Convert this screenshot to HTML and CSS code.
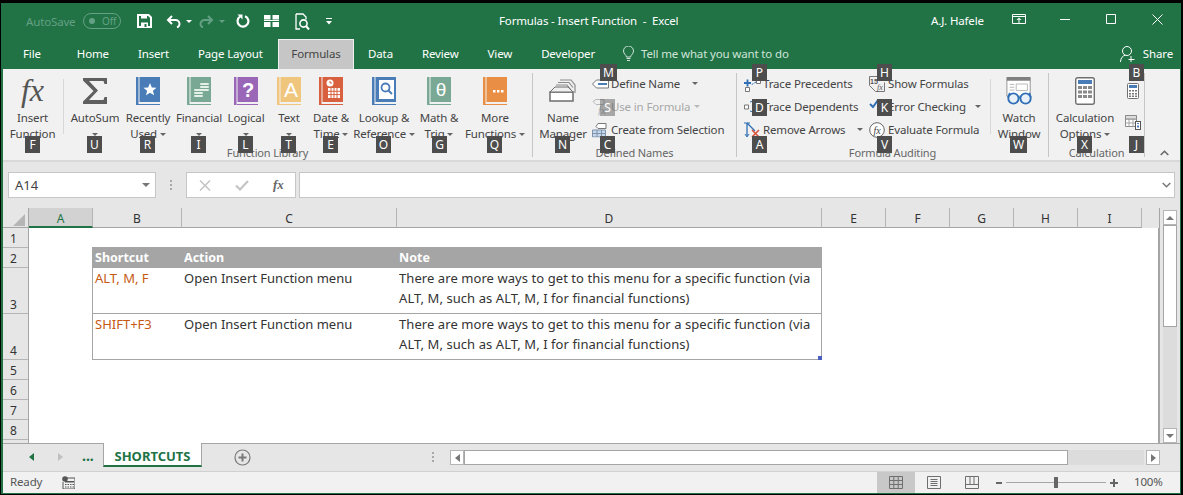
FILE: index.html
```html
<!DOCTYPE html>
<html lang="en">
<head>
<meta charset="utf-8">
<title>Formulas - Insert Function - Excel</title>
<link rel="stylesheet" href="styles.css">
</head>
<body>
<div class="window">
  <header class="titlebar">
    <div class="qat">
      <span class="autosave">AutoSave</span>
      <span class="toggle"><i class="toggle-dot"></i>Off</span>
      <svg class="q-save" width="15" height="14" viewBox="0 0 15 14"><path d="M1 1h10.500L14 3.500V13H1z" fill="none" stroke="#fff" stroke-width="2"/><path d="M4 1h6v3.500H4zM4 8.500h7V13H4z" fill="#fff"/><path d="M7.500 10h2v3h-2z" fill="#217346"/></svg>
      <svg class="q-undo" width="15" height="13" viewBox="0 0 15 13"><path d="M6 1 2 5l4 4M2 5h7.500a4 4 0 0 1 4 4c0 1.800-1 3-2.500 3.500" fill="none" stroke="#fff" stroke-width="2"/></svg>
      <i class="caret caret-white q-c1"></i>
      <svg class="q-redo" width="15" height="13" viewBox="0 0 15 13"><path d="M9 1l4 4-4 4M13 5H5.500a4 4 0 0 0-4 4c0 1.800 1 3 2.500 3.500" fill="none" stroke="#64a083" stroke-width="2"/></svg>
      <i class="caret caret-faded q-c2"></i>
      <svg class="q-repeat" width="14" height="14" viewBox="0 0 14 14"><path d="M9 2.200a5.400 5.400 0 1 1-5 .5" fill="none" stroke="#fff" stroke-width="2.200"/><path d="M1.500 .5h5v5z" fill="#fff"/></svg>
      <svg class="q-view" width="15" height="12" viewBox="0 0 15 12"><path d="M0 0h6.500v4.500H0zM8.500 0H15v4.500H8.500zM0 7h6.500v5H0zM8.500 7H15v5H8.500z" fill="#fff"/><path d="M0 5.500h15" stroke="#fff"/></svg>
      <svg class="q-preview" width="15" height="17" viewBox="0 0 15 17"><path d="M1 1h7l3 3v2.500M1 1v15h4" fill="none" stroke="#fff" stroke-width="1.300"/><circle cx="8.500" cy="10.500" r="3.600" fill="none" stroke="#fff" stroke-width="1.600"/><path d="M11 13l3 3.500" stroke="#fff" stroke-width="2"/></svg>
      <svg class="q-more" width="6" height="7" viewBox="0 0 6 7"><path d="M0 0h6v1H0zM0 3h6L3 6.500z" fill="#fff"/></svg>
    </div>
    <div class="doc-title">Formulas - Insert Function&nbsp; -&nbsp; Excel</div>
    <div class="win-area">
      <span class="user">A.J. Hafele</span>
      <svg class="w-display" width="14" height="10" viewBox="0 0 14 10"><path d="M.5.5h13v9H.5zM.5 2.500h13" fill="none" stroke="#fff"/><path d="M7 3.500 4.500 6h5zM6.500 5.500h1v4h-1z" fill="#fff"/></svg>
      <svg class="w-min" width="10" height="1" viewBox="0 0 10 1"><path d="M0 .5h10" stroke="#fff"/></svg>
      <svg class="w-max" width="10" height="10" viewBox="0 0 10 10"><path d="M.5.5h9v9h-9z" fill="none" stroke="#fff"/></svg>
      <svg class="w-close" width="11" height="11" viewBox="0 0 11 11"><path d="M.5.5l10 10M10.500.5l-10 10" stroke="#fff"/></svg>
    </div>
  </header>

  <nav class="tabs">
    <span class="tab tab-file">File</span>
    <span class="tab">Home</span>
    <span class="tab">Insert</span>
    <span class="tab">Page Layout</span>
    <span class="tab tab-active">Formulas</span>
    <span class="tab">Data</span>
    <span class="tab">Review</span>
    <span class="tab">View</span>
    <span class="tab">Developer</span>
    <span class="tellme">
      <svg width="11" height="16" viewBox="0 0 11 16"><path d="M3.500 11C3 8.500.5 8 .5 5a5 5 0 0 1 10 0c0 3-2.500 3.500-3 6z" fill="none" stroke="#cfe3d8"/><path d="M3.500 12.500h4M4 14.500h3" stroke="#cfe3d8"/></svg>
      Tell me what you want to do
    </span>
    <span class="share">
      <svg width="16" height="18" viewBox="0 0 16 18"><circle cx="7" cy="6" r="4.500" fill="none" stroke="#fff"/><path d="M.5 17c0-4 2.500-6.500 5-6.800M11 11v6M8.500 14.500h6" fill="none" stroke="#fff"/></svg>
      Share
    </span>
  </nav>

  <section class="ribbon">
    <div class="group group-lib">
      <div class="group-body">
        <div class="big w-61 sep-after">
          <span class="fx-icon">fx</span>
          <span class="big-label">Insert<br>Function</span>
        </div>
        <div class="big w-54 ml-4">
          <svg class="big-icon" width="24" height="28" viewBox="0 0 24 28"><path d="M0 1h24v6h-2.500l-1-3H6l9 9.500L6 23h14.500l1-3H24v7H0v-2.500L10.500 14 0 3.500z" fill="#5f5f5f"/></svg>
          <span class="big-label">AutoSum<br><i class="caret"></i></span>
        </div>
        <div class="big w-52">
          <svg class="big-icon" width="24" height="28" viewBox="0 0 24 28"><path d="M0 0h2.500v28H0zM2.500 27H24v1H2.500zM3.500 0H24v25H3.500z" fill="#4a7db8"/><path d="M14 6l1.800 4.400 4.700.3-3.600 3 1.200 4.600-4.100-2.500-4 2.500 1.100-4.600-3.600-3 4.700-.3z" fill="#fff"/></svg>
          <span class="big-label">Recently<br>Used <i class="caret"></i></span>
        </div>
        <div class="big w-50">
          <svg class="big-icon" width="24" height="28" viewBox="0 0 24 28"><path d="M0 0h2.500v28H0zM2.500 27H24v1H2.500zM3.500 0H24v25H3.500z" fill="#79a994"/><g fill="#e4efe9"><rect x="13" y="6" width="9" height="2" rx="1"/><rect x="13" y="9" width="9" height="2" rx="1"/><rect x="13" y="12" width="9" height="2" rx="1"/><rect x="7" y="12" width="9" height="2" rx="1"/><rect x="7" y="15" width="9" height="2" rx="1"/><rect x="7" y="18" width="9" height="2" rx="1"/></g></svg>
          <span class="big-label">Financial<br><i class="caret"></i></span>
        </div>
        <div class="big w-44">
          <svg class="big-icon" width="24" height="28" viewBox="0 0 24 28"><path d="M0 0h2.500v28H0zM2.500 27H24v1H2.500zM3.500 0H24v25H3.500z" fill="#9966b8"/><text x="14" y="20" class="glyph glyph-q">?</text></svg>
          <span class="big-label">Logical<br><i class="caret"></i></span>
        </div>
        <div class="big w-42">
          <svg class="big-icon" width="24" height="28" viewBox="0 0 24 28"><path d="M0 0h2.500v28H0zM2.500 27H24v1H2.500zM3.500 0H24v25H3.500z" fill="#f0c67c"/><text x="14" y="20" class="glyph glyph-a">A</text></svg>
          <span class="big-label">Text<br><i class="caret"></i></span>
        </div>
        <div class="big w-42">
          <svg class="big-icon" width="24" height="28" viewBox="0 0 24 28"><path d="M0 0h2.500v28H0zM2.500 27H24v1H2.500zM3.500 0H24v25H3.500z" fill="#d8603f"/><circle cx="11" cy="6" r="3.500" fill="#fff"/><path d="M11 4v2h2" fill="none" stroke="#d8603f"/><path d="M9 11h12v10H9z" fill="#fff"/><path d="M12 11v10M15 11v10M18 11v10M9 14.300h12M9 17.600h12" stroke="#d8603f"/></svg>
          <span class="big-label">Date &amp;<br>Time <i class="caret"></i></span>
        </div>
        <div class="big w-64">
          <svg class="big-icon" width="24" height="28" viewBox="0 0 24 28"><path d="M0 0h2.500v28H0zM2.500 27H24v1H2.500zM3.500 0H24v25H3.500z" fill="#4a7db8"/><rect x="7" y="3" width="15" height="19" fill="#fff"/><circle cx="13.500" cy="10.500" r="4" fill="none" stroke="#4a7db8" stroke-width="1.800"/><path d="M16.500 13.500l3.500 3.500" stroke="#4a7db8" stroke-width="2"/></svg>
          <span class="big-label">Lookup &amp;<br>Reference <i class="caret"></i></span>
        </div>
        <div class="big w-46">
          <svg class="big-icon" width="24" height="28" viewBox="0 0 24 28"><path d="M0 0h2.500v28H0zM2.500 27H24v1H2.500zM3.500 0H24v25H3.500z" fill="#79a994"/><text x="14" y="19" class="glyph glyph-t">θ</text></svg>
          <span class="big-label">Math &amp;<br>Trig <i class="caret"></i></span>
        </div>
        <div class="big w-66">
          <svg class="big-icon" width="24" height="28" viewBox="0 0 24 28"><path d="M0 0h2.500v28H0zM2.500 27H24v1H2.500zM3.500 0H24v25H3.500z" fill="#e98f45"/><path d="M10 13h2.500v2.500H10zM14 13h2.500v2.500H14zM18 13h2.500v2.500H18z" fill="#fff"/></svg>
          <span class="big-label">More<br>Functions <i class="caret"></i></span>
        </div>
      </div>
      <div class="group-label">Function Library</div>
    </div>

    <div class="group group-names">
      <div class="group-body">
        <div class="big w-56 ml-2">
          <svg class="big-icon" width="28" height="28" viewBox="0 0 28 28"><path d="M11 3h11l4 5v8M9 5.500h11l4 5M7 8h11l4 5" fill="none" stroke="#8a8a8a" stroke-width="1.200"/><path d="M1 15h23v9H1z" fill="#fff" stroke="#6d6d6d" stroke-width="1.500"/><path d="M1 15l5-5h13l5 5z" fill="#efefef" stroke="#6d6d6d"/></svg>
          <span class="big-label">Name<br>Manager</span>
        </div>
        <div class="smalls">
          <div class="small">
            <svg class="small-icon" width="17" height="13" viewBox="0 0 17 13"><path d="M16.500 2.500v8H4.500L.5 6.500l4-4z" fill="#fff" stroke="#777"/><path d="M6 6.500h9" stroke="#4a7db8" stroke-width="2"/></svg>
            Define Name <i class="caret ml-car"></i>
          </div>
          <div class="small disabled">
            <svg class="small-icon" width="17" height="17" viewBox="0 0 17 17"><path d="M1 3l3-2h8v5H4z" fill="none" stroke="#b8b8b8"/><text x="6" y="15" class="glyph glyph-fxs">fx</text></svg>
            Use in Formula <i class="caret caret-light"></i>
          </div>
          <div class="small">
            <svg class="small-icon" width="15" height="15" viewBox="0 0 15 15"><path d="M.5 7.500h13v7H.5z" fill="#c7d6e8" stroke="#7b93ad"/><path d="M5 7.500v7M9.500 7.500v7M.5 11h13" stroke="#7b93ad"/><path d="M4 4l2-3h8v5H6z" fill="#fff" stroke="#777"/></svg>
            Create from Selection
          </div>
        </div>
      </div>
      <div class="group-label">Defined Names</div>
    </div>

    <div class="group group-audit">
      <div class="group-body">
        <div class="smalls col-1">
          <div class="small">
            <svg class="small-icon" width="17" height="16" viewBox="0 0 17 16"><path d="M12.500 3.500h4v4h-4zM1.500 11.500h4v4h-4z" fill="#fff" stroke="#777"/><path d="M0 7h7M3.500 3.500v7" stroke="#2f6fb5" stroke-width="1.800"/><path d="M12 6L7 9" stroke="#2f6fb5" stroke-dasharray="2 1"/></svg>
            Trace Precedents
          </div>
          <div class="small">
            <svg class="small-icon" width="17" height="16" viewBox="0 0 17 16"><path d="M.5 6h4v4h-4z" fill="#fff" stroke="#777"/><path d="M6 3c4-2 7 0 8 3M6 12c4 2 7 0 8-3" fill="none" stroke="#2f6fb5" stroke-dasharray="2 1"/></svg>
            Trace Dependents
          </div>
          <div class="small">
            <svg class="small-icon" width="17" height="16" viewBox="0 0 17 16"><path d="M3 1v13M3 1l8 8" fill="none" stroke="#2f6fb5" stroke-width="1.300"/><path d="M1 12l2 3 2-3M0 1h6" fill="none" stroke="#2f6fb5"/><path d="M8 8l7 7M15 8l-7 7" stroke="#d9503c" stroke-width="1.600"/></svg>
            Remove Arrows <i class="caret ml-car"></i>
          </div>
        </div>
        <div class="smalls col-2">
          <div class="small">
            <svg class="small-icon" width="16" height="16" viewBox="0 0 16 16"><path d="M.5.5h10l3 3M.5.500v9l6 6h9v-9" fill="none" stroke="#777"/><text x="1" y="8" class="glyph glyph-15">15</text><text x="8" y="14" class="glyph glyph-fxt">fx</text></svg>
            Show Formulas
          </div>
          <div class="small">
            <svg class="small-icon" width="16" height="16" viewBox="0 0 16 16"><path d="M1 5l3 3 5-7" fill="none" stroke="#2f6fb5" stroke-width="2"/><path d="M8 8l4-4 4 4-4 5z" fill="#f0c67c"/></svg>
            Error Checking <i class="caret ml-car-e"></i>
          </div>
          <div class="small">
            <svg class="small-icon" width="16" height="16" viewBox="0 0 16 16"><circle cx="8" cy="8" r="7.300" fill="#fff" stroke="#666"/><text x="8" y="11.500" class="glyph glyph-fxe">fx</text></svg>
            Evaluate Formula
          </div>
        </div>
        <div class="big w-58 sep-before">
          <svg class="big-icon" width="29" height="30" viewBox="0 0 29 30"><path d="M1 .5h25v20H1z" fill="#fff" stroke="#8f8f8f"/><path d="M1 0h25v4H1z" fill="#7f7f7f"/><path d="M4 8h5M4 11h5M4 14h5" stroke="#b5b5b5"/><path d="M11 7.500h12v7H11z" fill="#fff" stroke="#b5b5b5"/><circle cx="8" cy="23" r="5.500" fill="#e8f0fa" stroke="#2f6fb5" stroke-width="2"/><circle cx="21" cy="23" r="5.500" fill="#e8f0fa" stroke="#2f6fb5" stroke-width="2"/><path d="M13 22h3M2 22L4 17M27 22l-2-5" stroke="#2f6fb5" stroke-width="1.500"/></svg>
          <span class="big-label">Watch<br>Window</span>
        </div>
      </div>
      <div class="group-label">Formula Auditing</div>
    </div>

    <div class="group group-calc">
      <div class="group-body">
        <div class="big w-72">
          <svg class="big-icon" width="20" height="28" viewBox="0 0 20 28"><rect x=".7" y=".7" width="18.600" height="26.600" rx="2" fill="#fff" stroke="#707070" stroke-width="1.400"/><path d="M3 3h14v4H3z" fill="#4a7db8"/><path d="M3 9h4v3H3zM8 9h4v3H8zM13 9h4v3h-4zM3 13.500h4v3H3zM8 13.500h4v3H8zM13 13.500h4v3h-4zM3 18h4v3H3zM8 18h4v3H8zM13 18h4v3h-4z" fill="#8a8a8a"/></svg>
          <span class="big-label">Calculation<br>Options <i class="caret"></i></span>
        </div>
        <div class="calc-smalls">
          <svg width="12" height="16" viewBox="0 0 12 16"><rect x=".5" y=".5" width="11" height="15" rx="1" fill="#fff" stroke="#707070"/><path d="M2 2h8v3H2z" fill="#4a7db8"/><path d="M2 7h2v1.500H2zM5 7h2v1.500H5zM8 7h2v1.500H8zM2 10h2v1.500H2zM5 10h2v1.500H5zM8 10h2v1.500H8zM2 12.500h2V14H2zM5 12.500h2V14H5zM8 12.500h2V14H8z" fill="#777"/></svg>
          <svg width="16" height="15" viewBox="0 0 16 15"><path d="M.5.5h11v11H.5z" fill="#fff" stroke="#8a8a8a"/><path d="M4 .5v11M8 .5v11M.5 4h11M.5 8h11" stroke="#a5a5a5"/><path d="M.5.500h11V4H.500z" fill="#ddd" stroke="#8a8a8a"/><rect x="10.500" y="6.500" width="5" height="8" fill="#fff" stroke="#555"/><path d="M12 8h2v1h-2zM12 10.500h2v2h-2z" fill="#4a7db8"/></svg>
        </div>
      </div>
      <div class="group-label">Calculation</div>
    </div>

    <svg class="collapse" width="9" height="6" viewBox="0 0 9 6"><path d="M.7 5 4.500 1.300 8.300 5" fill="none" stroke="#666" stroke-width="1.500"/></svg>

    <span class="kt kt-f">F</span><span class="kt kt-u">U</span><span class="kt kt-r">R</span><span class="kt kt-i">I</span><span class="kt kt-l">L</span><span class="kt kt-t">T</span><span class="kt kt-e">E</span><span class="kt kt-o">O</span><span class="kt kt-g">G</span><span class="kt kt-q">Q</span><span class="kt kt-n">N</span><span class="kt kt-c">C</span><span class="kt kt-m">M</span><span class="kt kt-s">S</span><span class="kt kt-p">P</span><span class="kt kt-d">D</span><span class="kt kt-a">A</span><span class="kt kt-h">H</span><span class="kt kt-k">K</span><span class="kt kt-v">V</span><span class="kt kt-w">W</span><span class="kt kt-x">X</span><span class="kt kt-b">B</span><span class="kt kt-j">J</span>
  </section>

  <section class="formula-row">
    <div class="namebox">A14<i class="caret caret-name"></i></div>
    <div class="grip"><i></i><i></i><i></i></div>
    <div class="fxbox">
      <svg width="12" height="11" viewBox="0 0 12 11"><path d="M1 .5l10 10M11 .5l-10 10" stroke="#c4c4c4" stroke-width="1.500"/></svg>
      <svg width="14" height="11" viewBox="0 0 14 11"><path d="M1 5.500l4 4 8-8.500" fill="none" stroke="#c4c4c4" stroke-width="2.200"/></svg>
      <span class="fx-small">fx</span>
    </div>
    <div class="input">
      <svg width="9" height="6" viewBox="0 0 9 6"><path d="M.7 1l3.800 3.700L8.300 1" fill="none" stroke="#777" stroke-width="1.500"/></svg>
    </div>
  </section>

  <section class="sheet">
    <div class="sheet-main">
      <div class="col-heads">
        <div class="corner"><svg width="12" height="12" viewBox="0 0 12 12"><path d="M12 0v12H0z" fill="#b5b5b5"/></svg></div>
        <div class="ch ch-a">A</div><div class="ch ch-b">B</div><div class="ch ch-c">C</div><div class="ch ch-d">D</div><div class="ch ch-n">E</div><div class="ch ch-n">F</div><div class="ch ch-n">G</div><div class="ch ch-n">H</div><div class="ch ch-n">I</div>
      </div>
      <div class="sheet-body">
        <div class="row-heads">
          <div class="rh">1</div><div class="rh">2</div><div class="rh rh-tall">3</div><div class="rh rh-tall">4</div><div class="rh">5</div><div class="rh">6</div><div class="rh">7</div><div class="rh">8</div>
        </div>
        <div class="cells">
          <div class="table">
            <div class="t-row t-head"><span>Shortcut</span><span>Action</span><span>Note</span></div>
            <div class="t-row t-data">
              <span class="t-key">ALT, M, F</span>
              <span>Open Insert Function menu</span>
              <span class="t-note">There are more ways to get to this menu for a specific function (via ALT, M, such as ALT, M, I for financial functions)</span>
            </div>
            <div class="t-row t-data">
              <span class="t-key">SHIFT+F3</span>
              <span>Open Insert Function menu</span>
              <span class="t-note">There are more ways to get to this menu for a specific function (via ALT, M, such as ALT, M, I for financial functions)</span>
            </div>
            <i class="t-handle"></i>
          </div>
        </div>
      </div>
    </div>
    <div class="vscroll">
      <div class="sb-btn"><i class="caret caret-up"></i></div>
      <div class="v-thumb"></div>
      <div class="v-track"></div>
      <div class="sb-btn"><i class="caret caret-down"></i></div>
    </div>
  </section>

  <section class="sheet-tabs">
    <i class="nav-left"></i>
    <i class="nav-right"></i>
    <span class="nav-more">...</span>
    <span class="sheet-tab">SHORTCUTS</span>
    <svg class="add-sheet" width="17" height="17" viewBox="0 0 17 17"><circle cx="8.500" cy="8.500" r="7.500" fill="none" stroke="#7a7a7a" stroke-width="1.200"/><path d="M4.500 8.500h8M8.500 4.500v8" stroke="#7a7a7a" stroke-width="2"/></svg>
    <div class="grip grip-tabs"><i></i><i></i><i></i></div>
    <div class="hscroll">
      <div class="sb-btn h-btn"><i class="nav-left nav-dark"></i></div>
      <div class="h-thumb"></div>
      <div class="h-track"></div>
      <div class="sb-btn h-btn"><i class="nav-right nav-dark"></i></div>
    </div>
  </section>

  <footer class="status">
    <span class="ready">Ready</span>
    <svg class="macro" width="13" height="13" viewBox="0 0 13 13"><circle cx="3" cy="3" r="2.800" fill="#555"/><path d="M4 2h9v11H1V6" fill="none" stroke="#555"/><path d="M3 5h9v1.500H3z" fill="#555"/><path d="M3 8h1.500v1H3zM5.500 8H7v1H5.500zM8 8h1.500v1H8zM10.500 8H12v1h-1.500zM3 10.500h1.500v1H3zM5.500 10.500H7v1H5.500zM8 10.500h1.500v1H8zM10.500 10.500H12v1h-1.500z" fill="#555"/></svg>
    <div class="views">
      <span class="view view-on"><svg width="14" height="13" viewBox="0 0 14 13"><path d="M.5.500h13v12H.500zM4.800.500v12M9.200.500v12M.5 4.500h13M.5 8.500h13" fill="none" stroke="#6f6f6f"/></svg></span>
      <span class="view"><svg width="14" height="13" viewBox="0 0 14 13"><path d="M.5.500h13v12H.500z" fill="none" stroke="#6f6f6f"/><path d="M3.500 3.500h7M3.500 5.500h7M3.500 7.500h7M3.500 9.500h7" stroke="#6f6f6f"/></svg></span>
      <span class="view"><svg width="14" height="13" viewBox="0 0 14 13"><path d="M.5.500h13v12H.500zM.5 8.500h13M5 .500v8M9 .500v8" fill="none" stroke="#6f6f6f"/></svg></span>
    </div>
    <div class="zoom">
      <i class="z-minus"></i>
      <span class="z-slider"><i class="z-thumb"></i></span>
      <i class="z-plus"></i>
      <span class="z-val">100%</span>
    </div>
  </footer>
</div>
</body>
</html>
```

FILE: styles.css
```css
* { box-sizing: border-box; }
html, body { margin: 0; padding: 0; height: 100%; }
body {
  width: 1183px; height: 495px; overflow: hidden; background: #000;
  padding: 3px 2px 1px 1px;
  font-family: "Noto Sans", "Open Sans", sans-serif;
  font-size: 11.5px; letter-spacing: -0.15px; color: #444;
}
i { font-style: normal; }
svg { display: block; flex: none; }
.window {
  width: 1180px; height: 491px; background: #217346;
  padding: 0 1px 1px 2px;
  display: flex; flex-direction: column;
}

/* title bar */
.titlebar { height: 36px; flex: none; display: flex; align-items: center; position: relative; color: #fff; }
.qat { display: flex; align-items: center; padding-left: 23px; height: 100%; position: absolute; left: 0; top: 0; }
.autosave { color: #64a083; width: 57px; }
.toggle { width: 38px; height: 16px; border: 1px solid #64a083; border-radius: 8px; color: #64a083; font-size: 10px; line-height: 14px; display: flex; align-items: center; gap: 7px; padding-left: 5px; }
.toggle-dot { width: 6px; height: 6px; border-radius: 50%; background: #64a083; }
.q-save { margin-left: 16px; }
.q-undo { margin-left: 14px; }
.q-c1 { margin-left: 5px; }
.q-redo { margin-left: 7px; }
.q-c2 { margin-left: 5px; }
.q-repeat { margin-left: 11px; }
.q-view { margin-left: 14px; }
.q-preview { margin-left: 16px; }
.q-more { margin-left: 16px; }
.doc-title { position: absolute; left: 496px; top: 10px; white-space: nowrap; line-height: 16px; }
.win-area { position: absolute; right: 0; top: 0; left: 0; height: 100%; pointer-events: none; }
.user { position: absolute; left: 928px; top: 10px; line-height: 16px; }
.w-display { position: absolute; left: 1009px; top: 11px; }
.w-min { position: absolute; left: 1057px; top: 16px; }
.w-max { position: absolute; left: 1103px; top: 11px; }
.w-close { position: absolute; left: 1149px; top: 11px; }

/* tabs */
.tabs { height: 30px; flex: none; display: flex; align-items: stretch; color: #fff; line-height: 30px; position: relative; }
.tab { padding: 0 14.500px; white-space: nowrap; }
.tab-file { padding: 0 21.500px 0 20px; }
.tab-active { background: #c6c6c6; color: #444; border: 1px solid #f0f0f0; border-bottom: 0; padding: 0 12.500px; line-height: 28px; margin: 0 -.5px 0 .5px; }
.tellme { display: flex; align-items: center; gap: 7px; margin-left: 13.500px; color: #cfe3d8; white-space: nowrap; }
.share { margin-left: auto; padding-right: 7px; display: flex; align-items: center; gap: 7px; }

/* ribbon */
.ribbon { height: 93px; flex: none; background: #f1f1f1; border-bottom: 2px solid #d8d8d8; display: flex; padding-top: 4px; position: relative; }
.group { height: 84px; display: flex; flex-direction: column; border-right: 1px solid #c6c6c6; flex: none; }
.group-lib { width: 530px; }
.group-names { width: 204px; }
.group-audit { width: 312px; }
.group-calc { width: 96px; }
.group-body { height: 73px; display: flex; }
.group-label { height: 11px; line-height: 14px; text-align: center; font-size: 11px; color: #666; white-space: nowrap; }
.big { display: flex; flex-direction: column; align-items: center; padding-top: 4px; flex: none; height: 73px; position: relative; }
.big-icon { height: 28px; }
.big-label { display: block; margin-top: 5px; text-align: center; line-height: 16px; white-space: nowrap; color: #444; }
.w-42 { width: 42px; } .w-44 { width: 44px; } .w-46 { width: 46px; } .w-50 { width: 50px; }
.w-52 { width: 52px; } .w-54 { width: 54px; } .w-56 { width: 56px; } .w-58 { width: 58px; }
.w-61 { width: 61px; } .w-64 { width: 64px; } .w-66 { width: 66px; } .w-72 { width: 72px; }
.ml-4 { margin-left: 4px; } .ml-2 { margin-left: 2px; }
.sep-after { border-right: 1px solid #d8d8d8; height: 55px; margin-top: 6px; padding-top: 0; overflow: visible; padding-right: 1px; }
.sep-after .fx-icon { margin-top: -3px; }
.sep-after .big-label { margin-top: 6px; }
.sep-before { margin-left: 5px; }
.sep-before::before { content: ""; position: absolute; left: 0; top: 6px; height: 55px; border-left: 1px solid #d8d8d8; }
.fx-icon { font: italic 32px/28px "Liberation Serif", serif; letter-spacing: 0; color: #555; height: 28px; }
.smalls { display: flex; flex-direction: column; width: 144px; margin-top: -1px; }
.col-1 { margin-left: 7px; width: 125px; }
.col-2 { width: 116px; }
.group-names .smalls { margin-left: 1px; }
.small { height: 23px; display: flex; align-items: center; white-space: nowrap; color: #444; position: relative; padding-left: 19px; gap: 4px; }
.small-icon { position: absolute; left: 0; top: 50%; transform: translateY(-50%); }
.disabled { color: #a8a8a8; }
.ml-car { margin-left: 8px; }
.ml-car-e { margin-left: 5px; }
.calc-smalls { width: 23px; display: flex; flex-direction: column; align-items: center; padding-top: 10px; gap: 16px; }
.collapse { position: absolute; right: 11px; top: 81px; }
.glyph { fill: #fff; text-anchor: middle; font-family: "Liberation Sans", sans-serif; font-weight: 700; letter-spacing: 0; }
.glyph-q { font-size: 20px; }
.glyph-a { font-size: 21px; font-weight: 400; }
.glyph-t { font-size: 19px; font-weight: 400; }
.glyph-fxs { fill: #b0b0b0; font: italic 11px "Liberation Serif", serif; text-anchor: start; }
.glyph-15 { fill: #555; font-size: 7px; text-anchor: start; }
.glyph-fxt { fill: #555; font: italic 8px "Liberation Serif", serif; text-anchor: start; }
.glyph-fxe { fill: #444; font: italic 10px "Liberation Serif", serif; }

.caret { display: inline-block; width: 0; height: 0; border: 3px solid transparent; border-top: 3px solid #666; border-bottom: 0; vertical-align: middle; flex: none; }
.caret-white { border-top-color: #fff; }
.caret-faded { border-top-color: #64a083; }
.caret-light { border-top-color: #b8b8b8; }

/* key tips */
.kt { position: absolute; width: 15px; height: 17px; top: 67px; background: #4d4d4d; color: #fff; font-size: 12px; letter-spacing: 0; line-height: 17px; text-align: center; }
.kt-f { left: 22px; } .kt-u { left: 84px; } .kt-r { left: 137px; } .kt-i { left: 188px; } .kt-l { left: 235px; }
.kt-t { left: 278px; } .kt-e { left: 320px; } .kt-o { left: 373px; } .kt-g { left: 429px; } .kt-q { left: 484px; }
.kt-n { left: 552px; } .kt-c { left: 597px; }
.kt-m { left: 597px; top: -5px; width: 17px; }
.kt-s { left: 597px; top: 30px; background: rgba(77,77,77,.45); }
.kt-p { left: 749px; top: -5px; } .kt-d { left: 749px; top: 30px; } .kt-a { left: 749px; }
.kt-h { left: 874px; top: -5px; } .kt-k { left: 874px; top: 30px; } .kt-v { left: 874px; }
.kt-w { left: 1007px; width: 17px; } .kt-x { left: 1074px; }
.kt-b { left: 1126px; top: -5px; } .kt-j { left: 1126px; }

/* formula bar */
.formula-row { height: 46px; flex: none; background: #e6e6e6; display: flex; padding: 10px 5px 10px 5px; }
.namebox { width: 148px; background: #fff; border: 1px solid #c6c6c6; padding-left: 6px; font-size: 13px; letter-spacing: 0; line-height: 24px; display: flex; align-items: center; justify-content: space-between; padding-right: 5px; color: #444; }
.caret-name { border-width: 4px; border-top-color: #777; border-bottom: 0; border-left-width: 4px; }
.grip { width: 30px; display: flex; flex-direction: column; align-items: center; justify-content: center; gap: 2px; }
.grip i { width: 2px; height: 2px; background: #a8a8a8; }
.fxbox { width: 110px; background: #fff; border: 1px solid #c6c6c6; display: flex; align-items: center; padding-left: 12px; gap: 24px; }
.fx-small { font: italic 700 13px "Liberation Serif", serif; letter-spacing: 0; color: #666; }
.input { margin-left: 3px; flex: 1; background: #fff; border: 1px solid #c6c6c6; display: flex; align-items: center; justify-content: flex-end; padding-right: 3px; }

/* sheet */
.sheet { height: 235px; flex: none; display: flex; background: #e6e6e6; }
.sheet-main { width: 1156px; display: flex; flex-direction: column; }
.col-heads { height: 20px; display: flex; flex: none; }
.corner { width: 26px; border-right: 1px solid #a5a5a5; border-bottom: 1px solid #a5a5a5; padding: 6px 0 0 10px; }
.ch { border-right: 1px solid #b5b5b5; border-bottom: 1px solid #a5a5a5; text-align: center; font-size: 12px; letter-spacing: 0; line-height: 21px; color: #333; flex: none; }
.ch-a { width: 64px; background: #d2d2d2; color: #217346; border-bottom: 2px solid #217346; }
.ch-b { width: 89px; } .ch-c { width: 215px; } .ch-d { width: 425px; } .ch-n { width: 64px; }
.sheet-body { flex: 1; display: flex; overflow: hidden; }
.row-heads { width: 26px; flex: none; border-right: 1px solid #a5a5a5; }
.rh { height: 20px; border-bottom: 1px solid #b5b5b5; display: flex; align-items: flex-end; justify-content: center; font-size: 12px; letter-spacing: 0; line-height: 16px; padding-right: 4px; color: #333; }
.rh-tall { height: 46px; }
.cells { flex: 1; background: #fff; border-right: 1px solid #a5a5a5; padding: 19px 0 0 63px; }
.table { width: 730px; border: 1px solid #a5a5a5; border-top: 0; position: relative; }
.t-row { display: grid; grid-template-columns: 89px 215px 1fr; color: #333; font-size: 13px; letter-spacing: 0; }
.t-head { background: #a5a5a5; color: #fff; font-weight: 700; font-size: 12.500px; height: 21px; line-height: 22px; margin: 0 -1px; grid-template-columns: 90px 215px 1fr; }
.t-head span { padding-left: 2px; }
.t-head span:first-child { padding-left: 3px; }
.t-data { height: 45px; line-height: 20px; }
.t-data span { padding-left: 2px; }
.t-data + .t-data { border-top: 1px solid #a5a5a5; height: 46px; }
.t-data .t-note { padding-right: 6px; letter-spacing: .07px; }
.t-key { color: #c65911; }
.t-handle { position: absolute; right: -1px; bottom: -1px; width: 4px; height: 4px; background: #4a5fc1; }

.vscroll { flex: 1; padding: 2px 3px 0 3px; display: flex; flex-direction: column; border-left: 1px solid #a5a5a5; position: relative; }
.sb-btn { height: 15px; background: #fff; border: 1px solid #b5b5b5; display: flex; align-items: center; justify-content: center; flex: none; }
.v-thumb { height: 102px; background: #fff; border: 1px solid #a5a5a5; flex: none; }
.v-track { flex: 1; background: #dcdcdc; }
.caret-up { border-top: 0; border-bottom: 4px solid #777; border-left-width: 4px; border-right-width: 4px; }
.caret-down { border-top: 4px solid #777; border-bottom: 0; border-left-width: 4px; border-right-width: 4px; }

/* sheet tabs */
.sheet-tabs { height: 28px; flex: none; background: #e6e6e6; border-top: 1px solid #a5a5a5; display: flex; align-items: flex-start; position: relative; }
.nav-left, .nav-right { width: 0; height: 0; border: 4px solid transparent; display: block; flex: none; }
.nav-left { border-right: 5px solid #217346; border-left: 0; margin: 9px 0 0 26px; }
.nav-right { border-left: 5px solid #c0c0c0; border-right: 0; margin: 9px 0 0 24px; }
.nav-dark.nav-left { border-right-color: #777; margin: 0; }
.nav-dark.nav-right { border-left-color: #777; margin: 0; }
.nav-more { color: #217346; font-weight: 700; font-size: 14px; letter-spacing: 0; margin-left: 19px; line-height: 24px; width: 21px; }
.sheet-tab { width: 99px; height: 24px; background: #fff; border: 1px solid #a5a5a5; border-top: 0; border-bottom: 2px solid #217346; margin-top: -1px; color: #217346; font-weight: 700; font-size: 13px; letter-spacing: 0; text-align: center; line-height: 26px; }
.add-sheet { margin: 5px 0 0 32px; }
.grip-tabs { width: 4px; margin: 8px 0 0 180px; }
.hscroll { width: 710px; margin: 6px 0 0 15px; display: flex; height: 15px; }
.h-btn { width: 14px; flex: none; }
.h-thumb { width: 604px; background: #fff; border: 1px solid #a5a5a5; flex: none; }
.h-track { flex: 1; background: #dcdcdc; margin-right: 2px; }

/* status */
.status { height: 22px; flex: none; background: #f1f1f1; border-top: 1px solid #d0d0d0; display: flex; align-items: center; position: relative; }
.ready { margin: -2px 0 0 7px; color: #555; width: 52px; }
.macro { flex: none; }
.views { display: flex; margin-left: 802px; height: 100%; }
.view { width: 38px; display: flex; align-items: center; justify-content: center; }
.view-on { background: #c8c8c8; }
.zoom { display: flex; align-items: center; margin-left: 5px; position: relative; }
.z-minus { width: 6px; height: 2px; background: #666; }
.z-slider { width: 100px; height: 1px; background: #a5a5a5; margin-left: 4px; position: relative; }
.z-thumb { position: absolute; left: 48px; top: -5px; width: 4px; height: 11px; background: #666; }
.z-plus { width: 8px; height: 8px; margin-left: 4px; background: linear-gradient(#666,#666) center/8px 2px no-repeat, linear-gradient(#666,#666) center/2px 8px no-repeat; }
.z-val { margin: -2px 0 0 16px; color: #555; }
```
